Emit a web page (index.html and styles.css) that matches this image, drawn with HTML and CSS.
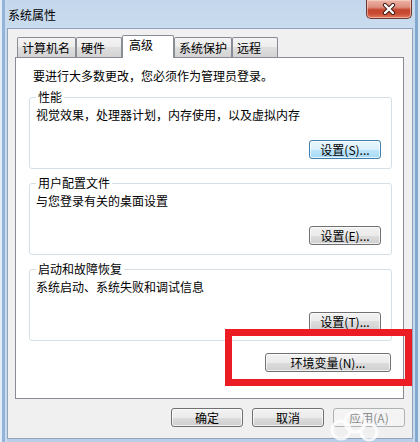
FILE: index.html
```html
<!DOCTYPE html>
<html lang="zh-CN">
<head>
<meta charset="utf-8">
<title>系统属性</title>
<link rel="stylesheet" href="styles.css">
</head>
<body>
<div class="window">
  <div class="titlebar">
    <span class="title">系统属性</span>
    <button class="close" aria-label="关闭">
      <svg width="16" height="12" viewBox="0 0 16 12">
        <path d="M4 2 L12 10 M12 2 L4 10" stroke="#3b1a14" stroke-width="4.2" stroke-linecap="round"/>
        <path d="M4 2 L12 10 M12 2 L4 10" stroke="#ffffff" stroke-width="2.4" stroke-linecap="round"/>
      </svg>
    </button>
  </div>
  <div class="client">
    <div class="tabs">
      <div class="tab">计算机名</div>
      <div class="tab">硬件</div>
      <div class="tab tab-active">高级</div>
      <div class="tab tab-narrow">系统保护</div>
      <div class="tab">远程</div>
    </div>
    <div class="panel">
      <p class="intro">要进行大多数更改，您必须作为管理员登录。</p>
      <div class="group">
        <span class="group-label">性能</span>
        <p class="group-text">视觉效果，处理器计划，内存使用，以及虚拟内存</p>
        <button class="btn btn-hot">设置(S)...</button>
      </div>
      <div class="group">
        <span class="group-label">用户配置文件</span>
        <p class="group-text">与您登录有关的桌面设置</p>
        <button class="btn">设置(E)...</button>
      </div>
      <div class="group">
        <span class="group-label">启动和故障恢复</span>
        <p class="group-text">系统启动、系统失败和调试信息</p>
        <button class="btn">设置(T)...</button>
      </div>
      <button class="btn btn-wide">环境变量(N)...</button>
    </div>
    <div class="footer">
      <button class="btn">确定</button>
      <button class="btn">取消</button>
      <button class="btn btn-disabled">应用(A)</button>
    </div>
  </div>
  <div class="highlight"></div>
  <svg class="watermark" width="80" height="34" viewBox="0 0 80 34">
    <g fill="none" stroke="#ffffff" stroke-width="3" opacity="0.8">
      <circle cx="16" cy="22" r="9"/>
      <circle cx="30" cy="14" r="10"/>
      <circle cx="44" cy="24" r="8"/>
    </g>
  </svg>
</div>
</body>
</html>
```
FILE: styles.css
```css
html, body {
  margin: 0;
  padding: 0;
}
body {
  width: 420px;
  height: 442px;
  overflow: hidden;
  font-family: "Noto Sans CJK SC", "Liberation Sans", sans-serif;
  font-size: 12px;
  color: #000;
}
.window {
  position: relative;
  width: 420px;
  height: 442px;
  display: flex;
  flex-direction: column;
  background:
    linear-gradient(to right, #e4edf7 0, #e4edf7 2px, #93b3d8 2px, #93b3d8 5px, #c9dbee 5px, #c9dbee 7px, transparent 7px) left top / 8px 100% no-repeat,
    linear-gradient(to right, transparent 0, #c7d9ed 1px, #c7d9ed 3px, #85a8d0 3px, #85a8d0 6px, #dbe7f4 6px) right top / 8px 100% no-repeat,
    linear-gradient(180deg, #c3d6eb 0, #cadcef 28px, #b8cfe7 100%);
}
.titlebar {
  height: 28px;
  display: flex;
  justify-content: space-between;
  align-items: flex-start;
  flex: none;
}
.title {
  margin: 8px 0 0 8px;
  line-height: 14px;
  color: #000;
}
.close {
  margin: 0 8px 0 0;
  width: 46px;
  height: 19px;
  padding: 0;
  border: 1px solid #6b3a33;
  border-top: none;
  border-radius: 0 0 5px 5px;
  background: linear-gradient(180deg, #ecb3a6 0%, #de8f7f 40%, #c5452f 55%, #c84b34 75%, #e07a5c 100%);
  box-shadow: inset 0 0 0 1px rgba(255, 220, 210, 0.55);
  display: flex;
  align-items: center;
  justify-content: center;
}
.close svg {
  display: block;
}
.client {
  flex: none;
  margin: 0 7px 0 7px;
  height: 411px;
  box-sizing: border-box;
  border: 1px solid #8fa4bc;
  background: #f0f0f0;
  padding: 6px 8px 0 7px;
  display: flex;
  flex-direction: column;
}
.tabs {
  height: 22px;
  display: flex;
  align-items: flex-end;
  padding-left: 2px;
  flex: none;
}
.tab {
  box-sizing: border-box;
  min-width: 46px;
  height: 20px;
  padding: 3px 5px 0 4px;
  line-height: 14px;
  border: 1px solid #898c95;
  border-bottom: none;
  border-radius: 2px 2px 0 0;
  background: linear-gradient(180deg, #f4f4f4 0%, #ececec 50%, #dfdfdf 50%, #d3d3d3 100%);
  white-space: nowrap;
}
.tab-narrow {
  padding-right: 4px;
}
.tab-active {
  position: relative;
  z-index: 1;
  min-width: 52px;
  height: 23px;
  margin-bottom: -1px;
  padding: 2px 5px 0 6px;
  background: #fff;
}
.panel {
  flex: none;
  height: 342px;
  box-sizing: border-box;
  border: 1px solid #898c95;
  background: #fff;
  padding: 11px 11px 0 13px;
  display: flex;
  flex-direction: column;
}
.intro {
  margin: 0 0 0 4px;
  line-height: 14px;
}
.group {
  position: relative;
  margin-top: 14px;
  height: 72px;
  box-sizing: border-box;
  border: 1px solid #d5dfe5;
  border-radius: 3px;
  padding: 10px 10px 9px 6px;
  display: flex;
  flex-direction: column;
}
.group-label {
  position: absolute;
  top: -8px;
  left: 6px;
  padding: 0 2px;
  line-height: 14px;
  background: #fff;
}
.group-text {
  margin: 0;
  line-height: 14px;
}
.btn {
  box-sizing: border-box;
  width: 72px;
  height: 19px;
  padding: 0;
  font-family: inherit;
  font-size: 12px;
  line-height: 17px;
  color: #000;
  border: 1px solid #707070;
  border-radius: 3px;
  background: linear-gradient(180deg, #f2f2f2 0%, #ebebeb 50%, #dddddd 50%, #cfcfcf 100%);
  box-shadow: inset 0 0 0 1px rgba(255, 255, 255, 0.7);
  white-space: nowrap;
}
.group .btn {
  margin-top: auto;
  align-self: flex-end;
}
.btn-hot {
  border-color: #3c7fb1;
  background: linear-gradient(180deg, #eaf6fd 0%, #d9f0fc 50%, #bee6fd 50%, #a7d9f5 100%);
}
.btn-wide {
  width: 126px;
  margin-top: 12px;
  margin-right: 1px;
  align-self: flex-end;
}
.btn-disabled {
  color: #8d8d8d;
  border-color: #adb2b5;
  background: #f4f4f4;
  box-shadow: none;
}
.footer {
  margin-top: 9px;
  margin-right: -1px;
  display: flex;
  justify-content: flex-end;
  gap: 9px;
}
.highlight {
  position: absolute;
  left: 225px;
  top: 329px;
  width: 187px;
  height: 57px;
  box-sizing: border-box;
  border: 7px solid #ec1c24;
}
.watermark {
  position: absolute;
  left: 325px;
  top: 408px;
}
```
